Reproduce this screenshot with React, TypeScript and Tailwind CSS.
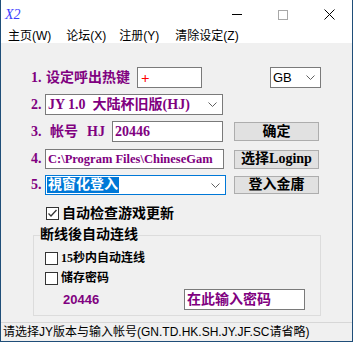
import React from 'react';

const sans = "font-['Liberation_Sans','Noto_Sans_CJK_SC',sans-serif]";
const serif = "font-['Liberation_Serif','Noto_Sans_CJK_SC',serif]";

function Chevron() {
  return (
    <svg width="9" height="5" viewBox="0 0 9 5" className="shrink-0">
      <polyline points="0.5,0.5 4.5,4.5 8.5,0.5" fill="none" stroke="#606060" strokeWidth="1" />
    </svg>
  );
}

function Check({ checked }: { checked?: boolean }) {
  return (
    <div className="w-[13px] h-[13px] border border-[#333333] bg-white shrink-0 flex items-center justify-center">
      {checked && (
        <svg width="11" height="11" viewBox="0 0 11 11">
          <polyline points="1.5,5.5 4,8 9.5,2" fill="none" stroke="#333333" strokeWidth="1.3" />
        </svg>
      )}
    </div>
  );
}

function Btn({ label, h }: { label: string; h: string }) {
  return (
    <div
      className={`w-[85px] ${h} bg-[#e1e1e1] border border-[#adadad] flex items-center justify-center text-[14px] leading-[14px] font-bold text-black ${serif}`}
    >
      {label}
    </div>
  );
}

export default function App() {
  return (
    <div className={`w-[353px] h-[342px] flex flex-col bg-[#f0f0f0] border-l border-r border-b border-[#1f4e79] overflow-hidden ${sans}`}>
      {/* title bar */}
      <div className="h-[29px] bg-white flex items-center shrink-0">
        <span className="pl-[4px] text-[14px] leading-[14px] italic text-[#3c3cff] font-['Liberation_Serif',serif]">X2</span>
        <div className="ml-auto flex h-full">
          <div className="w-[46px] h-full flex items-center justify-center">
            <div className="w-[10px] h-px bg-black" />
          </div>
          <div className="w-[46px] h-full flex items-center justify-center">
            <div className="w-[10px] h-[10px] border border-[#a8a8a8]" />
          </div>
          <div className="w-[46px] h-full flex items-center justify-center">
            <svg width="11" height="11" viewBox="0 0 11 11">
              <path d="M0.5 0.5 L10.5 10.5 M10.5 0.5 L0.5 10.5" stroke="#000" strokeWidth="1" />
            </svg>
          </div>
        </div>
      </div>

      {/* menu bar */}
      <div className="h-[14px] bg-white flex items-center text-[12px] leading-[14px] text-black shrink-0">
        <span className="ml-[7px]">主页(W)</span>
        <span className="ml-[15px]">论坛(X)</span>
        <span className="ml-[13px]">注册(Y)</span>
        <span className="ml-[16px]">清除设定(Z)</span>
      </div>

      {/* row 1 */}
      <div className={`mt-[24px] h-[21px] flex items-center pl-[30px] text-[14px] leading-[14px] font-bold text-[#800080] ${serif}`}>
        <div className="w-[106px] flex">
          <span className="w-[15px]">1.</span>
          <span>设定呼出热键</span>
        </div>
        <div className="w-[65px] h-[21px] border border-[#7a7a7a] bg-white flex items-center pl-[3px] text-[#ff0000] text-[15px]">+</div>
        <div className={`ml-[68px] w-[51px] h-[21px] border border-[#7a7a7a] bg-white flex items-center pl-[2px] pr-[5px] justify-between text-[13px] font-normal text-black ${sans}`}>
          <span>GB</span>
          <Chevron />
        </div>
      </div>

      {/* row 2 */}
      <div className={`mt-[6px] h-[21px] flex items-center pl-[30px] text-[14px] leading-[14px] font-bold text-[#800080] ${serif}`}>
        <span className="w-[14px]">2.</span>
        <div className="w-[178px] h-[21px] border border-[#7a7a7a] bg-white flex items-center justify-between pl-[2px] pr-[5px]">
          <span className="whitespace-pre">JY 1.0  大陆杯旧版(HJ)</span>
          <Chevron />
        </div>
      </div>

      {/* row 3 */}
      <div className={`mt-[6px] h-[21px] flex items-center pl-[30px] text-[14px] leading-[14px] font-bold text-[#800080] ${serif}`}>
        <div className="w-[81px] flex">
          <span className="w-[19px]">3.</span>
          <span>帐号</span>
          <span className="ml-[9px]">HJ</span>
        </div>
        <div className="w-[111px] h-[21px] border border-[#7a7a7a] bg-white flex items-center pl-[2px]">20446</div>
        <div className="ml-[11px]">
          <Btn label="确定" h="h-[19px]" />
        </div>
      </div>

      {/* row 4 */}
      <div className={`mt-[7px] h-[20px] flex items-center pl-[30px] text-[14px] leading-[14px] font-bold text-[#800080] ${serif}`}>
        <span className="w-[14px]">4.</span>
        <div className="w-[179px] h-[20px] border border-[#7a7a7a] bg-white flex items-center pl-[2px] text-[12.5px] whitespace-nowrap">
          C:\Program Files\ChineseGam
        </div>
        <div className="ml-[10px]">
          <Btn label="选择Loginp" h="h-[19px]" />
        </div>
      </div>

      {/* row 5 */}
      <div className={`mt-[6px] h-[20px] flex items-center pl-[30px] text-[14px] leading-[14px] font-bold text-[#800080] ${serif}`}>
        <span className="w-[14px]">5.</span>
        <div className="w-[181px] h-[20px] border border-[#0078d7] bg-white flex items-center justify-between pl-[1px] pr-[5px]">
          <span className="bg-[#0078d7] text-white px-[1px] h-[16px] flex items-center">視窗化登入</span>
          <Chevron />
        </div>
        <div className="ml-[8px]">
          <Btn label="登入金庸" h="h-[18px]" />
        </div>
      </div>

      {/* auto update */}
      <div className={`mt-[12px] h-[13px] flex items-center pl-[45px] text-[14px] leading-[14px] font-bold text-black ${serif}`}>
        <Check checked />
        <span className="ml-[3px]">自动检查游戏更新</span>
      </div>

      {/* reconnect group */}
      <fieldset className="mt-[8px] ml-[32px] w-[288px] border border-[#dcdcdc] pl-[6px] pt-[10px] pb-[5px]">
        <legend className={`text-[14px] leading-[14px] font-bold text-black ${serif}`}>断线後自动连线</legend>
        <div className={`flex flex-col text-[12px] leading-[13px] font-bold text-black ${serif}`}>
          <div className="h-[13px] flex items-center pl-[5px]">
            <Check />
            <span className="ml-[3px]">15秒内自动连线</span>
          </div>
          <div className="mt-[7px] h-[13px] flex items-center pl-[5px]">
            <Check />
            <span className="ml-[3px]">储存密码</span>
          </div>
          <div className="mt-[4px] h-[21px] flex items-center pl-[23px]">
            <span className={`w-[121px] text-[13px] text-[#800080] ${sans}`}>20446</span>
            <div className="w-[121px] h-[21px] border border-[#7a7a7a] bg-white flex items-center pl-[2px] text-[14px] leading-[14px] text-[#800080]">
              在此输入密码
            </div>
          </div>
        </div>
      </fieldset>

      {/* status bar */}
      <div className="mt-auto h-[19px] border-t border-[#d7d7d7] flex items-center pl-[2px] text-[12px] leading-[14px] text-black shrink-0 whitespace-nowrap">
        请选择JY版本与输入帐号(GN.TD.HK.SH.JY.JF.SC请省略)
      </div>
    </div>
  );
}
